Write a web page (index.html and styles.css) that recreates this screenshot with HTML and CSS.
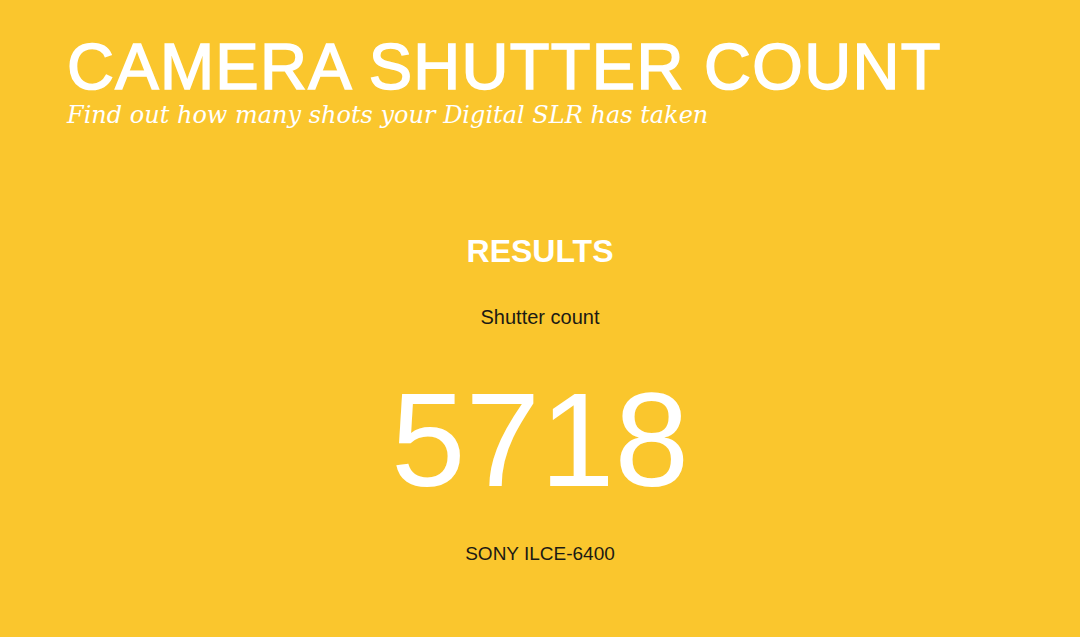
FILE: index.html
```html
<!DOCTYPE html>
<html>
<head>
<meta charset="utf-8">
<link rel="stylesheet" href="styles.css">
</head>
<body>
<header class="header">
  <h1 class="title">CAMERA SHUTTER COUNT</h1>
  <p class="tagline">Find out how many shots your Digital SLR has taken</p>
</header>
<main class="results">
  <h2 class="results-title">RESULTS</h2>
  <p class="label">Shutter count</p>
  <p class="count">5718</p>
  <p class="model">SONY ILCE-6400</p>
</main>
</body>
</html>
```

FILE: styles.css
```css
html, body {
  margin: 0;
  padding: 0;
  background: #fac62d;
  height: 100%;
}
body {
  font-family: "Liberation Sans", Arial, sans-serif;
  overflow: hidden;
}
.header {
  padding: 34px 0 0 67px;
}
.title {
  margin: 0;
  font-size: 65px;
  line-height: 66px;
  font-weight: 400;
  color: #fff;
  letter-spacing: 1.3px;
  -webkit-text-stroke: 1.6px #fff;
  white-space: nowrap;
}
.tagline {
  margin: 0;
  font-family: "DejaVu Serif", Georgia, serif;
  font-style: italic;
  font-size: 24px;
  line-height: 30px;
  color: #fff;
  white-space: nowrap;
}
.results {
  display: flex;
  flex-direction: column;
  align-items: center;
  text-align: center;
}
.results-title {
  margin: 103px 0 0;
  font-size: 32px;
  line-height: 36px;
  font-weight: 700;
  color: #fff;
}
.label {
  margin: 36px 0 0;
  font-size: 20px;
  line-height: 24px;
  color: #1c1a14;
}
.count {
  margin: 41px 0 0;
  font-size: 134px;
  line-height: 140px;
  color: #fff;
}
.model {
  margin: 32px 0 0;
  font-size: 19px;
  line-height: 24px;
  color: #1c1a14;
}
```
